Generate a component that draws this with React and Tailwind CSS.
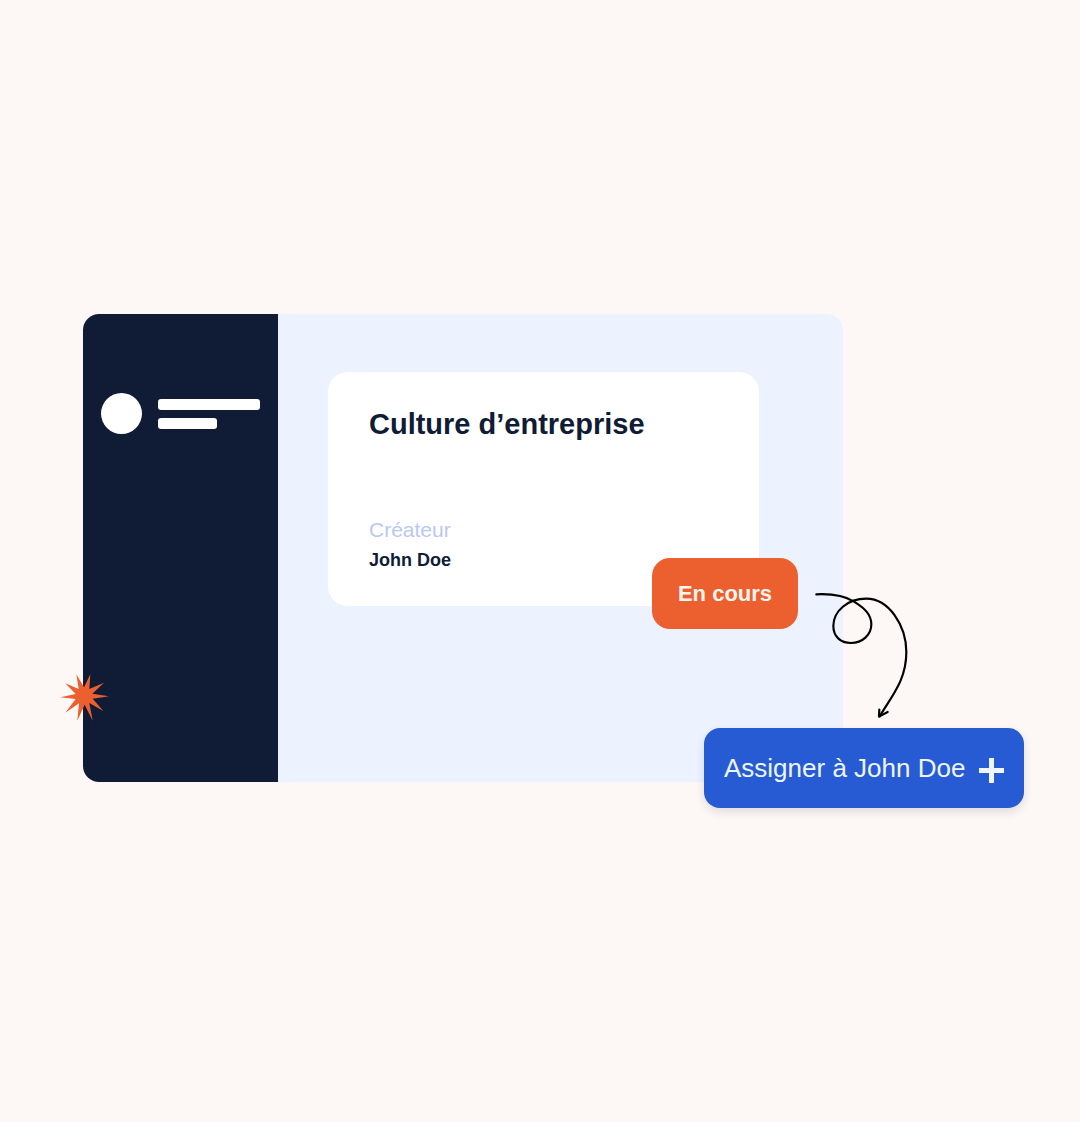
import React from "react";

function Burst() {
  return (
    <svg
      className="absolute bottom-[61px] -left-[23px] h-[47px] w-[49px]"
      viewBox="30 42 147 141"
      fill="#ec5f2f"
      aria-hidden="true"
    >
      <path d="M177 109L128 116L160 153L118 129L128 182L104 134L82 182L87 130L46 158L77 117L31 112L77 102L46 70L86 87L79 43L102 82L121 43L118 87L162 68L127 101Z" />
    </svg>
  );
}

function LoopArrow() {
  return (
    <svg
      className="absolute -right-[87px] bottom-[42px] h-[170px] w-[130px]"
      viewBox="0 0 390 510"
      fill="none"
      stroke="#000"
      strokeWidth="6.5"
      strokeLinecap="round"
      strokeLinejoin="round"
      aria-hidden="true"
    >
      <path d="M49 73C93 71 132 76 162 95C193 114 214 133 214 163C214 195 187 219 153 219C121 219 100 199 100 168C100 123 143 86 199 86C266 86 319 166 319 246C319 329 278 374 239 439" />
      <path d="M238 419L237 440L263 426" />
    </svg>
  );
}

function Sidebar() {
  return (
    <aside className="w-[195px] shrink-0 rounded-l-2xl bg-[#101c36] px-[18px] pt-[79px]">
      <div className="flex items-center gap-4">
        <div className="size-[41px] shrink-0 rounded-full bg-white" />
        <div className="flex flex-1 flex-col gap-2">
          <div className="h-[11px] rounded-[3px] bg-white" />
          <div className="h-[11px] w-[59px] rounded-[3px] bg-white" />
        </div>
      </div>
    </aside>
  );
}

function CourseCard() {
  return (
    <article className="relative rounded-[20px] bg-white px-[41px] py-8 text-[#101c36]">
      <h1 className="text-[29px] leading-10 font-bold">Culture d’entreprise</h1>
      <dl className="mt-[70px]">
        <dt className="text-[21px] leading-8 text-[#b9c8f2]">Créateur</dt>
        <dd className="text-lg leading-7 font-bold">John Doe</dd>
      </dl>
      <span className="absolute -right-[39px] -bottom-[23px] flex h-[71px] w-[146px] items-center justify-center rounded-[18px] bg-[#ec5f2f] text-[22px] font-bold whitespace-nowrap text-[#fff5ef]">
        En cours
      </span>
    </article>
  );
}

export default function App() {
  return (
    <main className="min-h-screen bg-[#fdf8f5] pt-[314px] pr-[237px] pb-20 pl-[83px] font-['Liberation_Sans',Arial,sans-serif]">
      <section className="relative flex">
        <Sidebar />
        <div className="flex-1 rounded-r-2xl bg-[#ecf3ff] pt-[58px] pr-[84px] pb-44 pl-[50px]">
          <CourseCard />
        </div>
        <Burst />
        <LoopArrow />
        <button
          type="button"
          className="absolute -right-[181px] -bottom-[26px] flex h-20 w-80 items-center justify-between rounded-2xl bg-[#275bd3] px-5 text-[26px] whitespace-nowrap text-[#edf5ff] shadow-[0_4px_10px_rgba(16,28,54,0.12)]"
        >
          Assigner à John Doe
          <svg
            className="mt-1 size-[25px]"
            viewBox="0 0 25 25"
            fill="none"
            stroke="currentColor"
            strokeWidth="5"
            aria-hidden="true"
          >
            <path d="M12.5 0V25M0 12.5H25" />
          </svg>
        </button>
      </section>
    </main>
  );
}
